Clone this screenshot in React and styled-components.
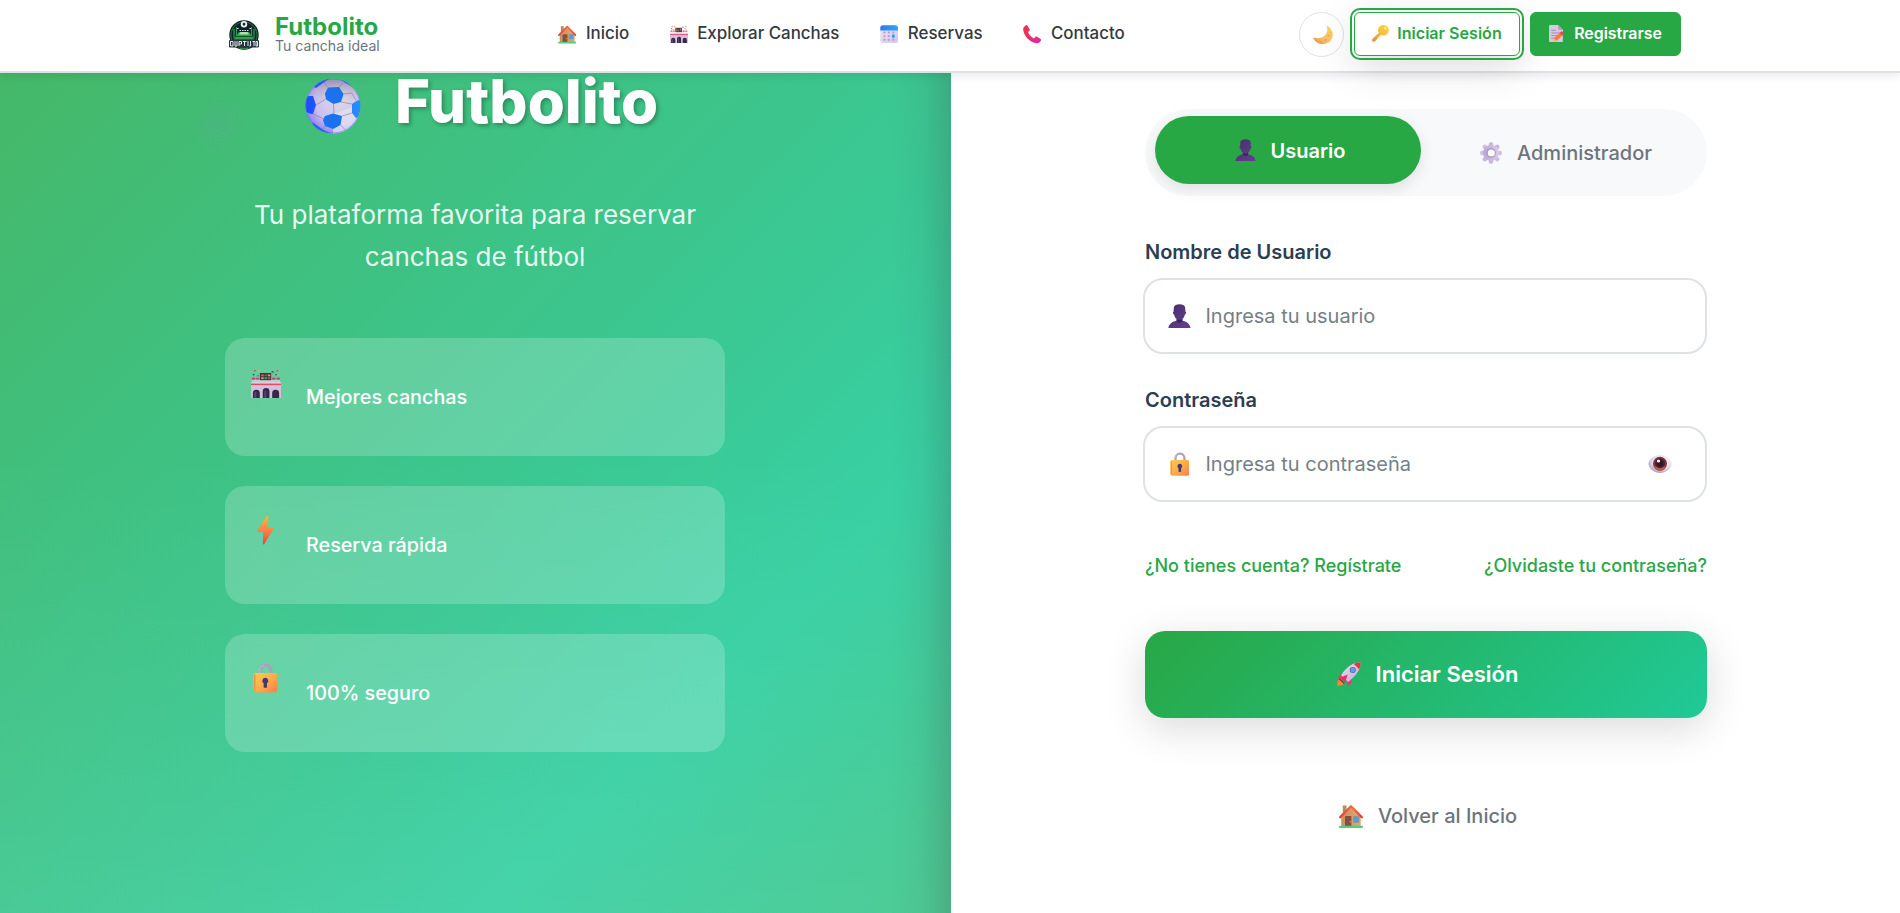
import React from "react";
import styled, { createGlobalStyle, css } from "styled-components";

const Global = createGlobalStyle`
  * { box-sizing: border-box; }
  body { margin: 0; background: #fefefe; font-family: Inter, "Liberation Sans", sans-serif; overflow: hidden; }
  button, input { font-family: inherit; }
  a { text-decoration: none; color: inherit; }
`;

/* ---------- icons ---------- */
const Svg = styled.svg`
  display: block;
  flex: none;
  width: ${(p) => p.$w}px;
  height: ${(p) => p.$h || p.$w}px;
`;

const House = ({ size }) => (
  <Svg $w={size} viewBox="0 0 32 32">
    <defs>
      <linearGradient id="hw" x1="0" x2="1"><stop offset="0" stopColor="#c98f62" /><stop offset="1" stopColor="#e3a878" /></linearGradient>
      <linearGradient id="hr" x1="0" x2="1"><stop offset="0" stopColor="#d9463a" /><stop offset=".6" stopColor="#f4703c" /><stop offset="1" stopColor="#dc4434" /></linearGradient>
    </defs>
    <path d="M5 2h5v12H5z" fill="#b98a6a" />
    <path d="M16 4 29 17v13H3V17z" fill="url(#hw)" />
    <rect x="8" y="16" width="8.500" height="14" rx="1" fill="#85503f" />
    <circle cx="15" cy="23.500" r=".9" fill="#f1b35c" />
    <rect x="19.500" y="16.500" width="7" height="8" rx=".6" fill="#36a9f5" stroke="#b87c5c" strokeWidth=".8" />
    <path d="M1.700 17.500 16 3 30.300 17.500" fill="none" stroke="url(#hr)" strokeWidth="3.200" strokeLinejoin="round" strokeLinecap="round" />
    <rect x="0" y="29" width="32" height="3" rx="1.400" fill="#4fcf7d" />
  </Svg>
);

const Stadium = ({ size }) => (
  <Svg $w={size} $h={size * 0.95} viewBox="0 0 32 30">
    <rect x="9.500" y="3" width="12" height="8" fill="#403046" />
    <rect x="11" y="4.500" width="2.500" height="2" fill="#e0674a" /><rect x="14.500" y="4.500" width="2.500" height="2" fill="#7a6a3a" /><rect x="18" y="4.500" width="2.500" height="2" fill="#f2a03a" />
    <rect x="11" y="7.500" width="2.500" height="2" fill="#f2a03a" /><rect x="14.500" y="7.500" width="2.500" height="2" fill="#3aa870" /><rect x="18" y="7.500" width="2.500" height="2" fill="#d84a5a" />
    <g fill="#c93f6c"><rect x="3" y="0" width="2" height="1.200" /><rect x="27" y="0" width="2" height="1.200" /><rect x="1" y="8" width="3.500" height="2" /><rect x="5.500" y="8" width="3" height="2" /><rect x="22.500" y="8" width="3.500" height="2" /><rect x="27.300" y="8" width="3.500" height="2" /></g>
    <g fill="#f3ac3b"><rect x="7" y="0" width="2.400" height="1.800" /><rect x="4" y="5" width="1.500" height="1.300" /><rect x="29" y="5" width="1.200" height="1.200" /></g>
    <g fill="#55406e"><rect x="2" y="4" width="1.600" height="1.600" /><rect x="22" y="1" width="2" height="1.600" /><rect x="6.500" y="5.500" width="1.500" height="1" /><rect x="26" y="4" width="1.500" height="1.500" /></g>
    <path d="M1 10.500h30v3H1z" fill="#eadfed" opacity=".6" />
    <rect x="0" y="13" width="32" height="17" fill="#d2c3dc" />
    <rect x="0" y="13" width="32" height="1.300" fill="#e3d6e9" />
    <rect x="0" y="14.300" width="32" height="1.600" fill="#ec4768" />
    <path d="M2 30v-5.500a3.700 3.700 0 0 1 7.400 0V30zM12.500 30v-7.500a3.600 3.600 0 0 1 7.200 0V30zM22.600 30v-5.500a3.700 3.700 0 0 1 7.400 0V30z" fill="#39264b" />
    <path d="M3.500 30v-5a2.200 2.200 0 0 1 2.200-2.200V30zM14.200 30v-7a2 2 0 0 1 2-2V30z" fill="#5b4470" />
  </Svg>
);

const Calendar = () => (
  <Svg $w={18.4} viewBox="0 0 32 32">
    <defs>
      <linearGradient id="cb" x2="1" y2="1"><stop offset="0" stopColor="#efe6f7" /><stop offset="1" stopColor="#d9c4ea" /></linearGradient>
      <linearGradient id="ct" x2="1"><stop offset="0" stopColor="#2b7bf0" /><stop offset="1" stopColor="#2ba7fb" /></linearGradient>
    </defs>
    <rect x=".5" y=".5" width="31" height="31" rx="5" fill="url(#cb)" />
    <path d="M.5 9.500V5.500a5 5 0 0 1 5-5h21a5 5 0 0 1 5 5v4z" fill="url(#ct)" />
    <g fill="#b3a2c1">{[0, 1, 2].map((r) => [0, 1, 2].map((c) => (r === 1 && c === 2 ? null : <rect key={`${r}${c}`} x={5.8 + c * 7.7} y={11.500 + r * 6.2} width="3.800" height="3.300" rx=".8" />)))}</g>
    <rect x="21" y="16.500" width="4.500" height="5.500" rx="1" fill="#1f9bf7" />
  </Svg>
);

const Phone = () => (
  <Svg $w={18.4} viewBox="0 0 32 32">
    <defs><linearGradient id="ph" x2="1" y2="1"><stop offset="0" stopColor="#e8354f" /><stop offset=".5" stopColor="#e92f6c" /><stop offset="1" stopColor="#cf2fb4" /></linearGradient></defs>
    <path d="M2.500 2.600 5 .6c1-.8 2.200-.5 2.900.6l3.600 6.300c.6 1 .4 2.200-.5 2.900L8.600 12.300c1.700 4.700 5.900 9 10.700 11.200l2.100-2.500c.8-.9 2-1.100 3-.5l6.200 3.900c1.100.7 1.300 2 .5 3l-2 2.400c-1.400 1.600-3.300 2.100-5.300 1.800C11.600 29.700 2 20 .3 8.100c-.3-2.100.5-4.100 2.200-5.500z" fill="url(#ph)" />
  </Svg>
);

const Moon = () => (
  <Svg $w={20} viewBox="0 0 32 32">
    <defs><linearGradient id="mn" x1="1" x2="0" y2="1"><stop offset="0" stopColor="#ffd65f" /><stop offset=".6" stopColor="#f7c16a" /><stop offset="1" stopColor="#dc8a4a" /></linearGradient></defs>
    <path d="M23.500 1.500C33.500 8 34 20 26.500 26.700 18.500 33.500 5.500 31.500.700 21.500c-.4-1 .5-1.800 1.500-1.400C14 24.400 26 15 22.200 2.500c-.3-1 .5-1.500 1.300-1z" fill="url(#mn)" />
    <g fill="#e3a253" opacity=".7"><circle cx="25" cy="17" r="1.700" /><circle cx="20" cy="24" r="2" /><circle cx="12" cy="27" r="1.400" /><circle cx="28" cy="12" r="1" /></g>
  </Svg>
);

const Key = () => (
  <Svg $w={17} viewBox="0 0 32 32">
    <defs><linearGradient id="ky" x1="1" x2="0" y2="1"><stop offset="0" stopColor="#ffd84a" /><stop offset=".5" stopColor="#fbb83f" /><stop offset="1" stopColor="#e6863f" /></linearGradient></defs>
    <path d="M22 0a9.800 9.800 0 1 1-5.200 18.200L6.800 29.800c-1.400 1.700-4.300 2.300-5.600 1.200s-1.300-3.400-.1-4.900L12.900 14.800A9.800 9.800 0 0 1 22 0z" fill="url(#ky)" />
    <circle cx="24.500" cy="6.500" r="2.200" fill="#fff1bd" />
  </Svg>
);

const Memo = () => (
  <Svg $w={15} $h={17} viewBox="0 0 28 32">
    <path d="M0 2a2 2 0 0 1 2-2h15l9 9v21a2 2 0 0 1-2 2H2a2 2 0 0 1-2-2z" fill="#d5cbe1" />
    <path d="M17 0l9 9h-7a2 2 0 0 1-2-2z" fill="#a99bb8" />
    <g stroke="#9d8eae" strokeWidth="1.800"><path d="M4 10h9M4 15h18M4 20h14M4 25h10" /></g>
    <path d="m9 25 12-11 5 5-12 11-6 1z" fill="#fb7a3d" /><path d="m20 15 3-3c1-1 5 3 5 4.500L25.500 20z" fill="#ef3d5b" /><path d="m9 25 5 5-6 1z" fill="#ffc085" />
  </Svg>
);

const Ball = () => (
  <Svg $w={56} viewBox="0 0 56 56">
    <defs>
      <radialGradient id="bl" cx=".62" cy=".38" r=".75"><stop offset="0" stopColor="#dedbe6" /><stop offset=".6" stopColor="#cbbfee" /><stop offset="1" stopColor="#7a63f5" /></radialGradient>
      <linearGradient id="bs" x2="0" y2="1"><stop offset="0" stopColor="#7c7192" stopOpacity=".65" /><stop offset=".45" stopColor="#bbb" stopOpacity="0" /></linearGradient>
      <linearGradient id="bp" x2="1"><stop offset="0" stopColor="#1f47ff" /><stop offset=".5" stopColor="#1a73f5" /><stop offset="1" stopColor="#2d93ff" /></linearGradient>
      <clipPath id="bc"><circle cx="28" cy="28" r="27.500" /></clipPath>
    </defs>
    <g clipPath="url(#bc)">
      <circle cx="28" cy="28" r="27.500" fill="url(#bl)" />
      <path d="M28 36l20-7 8 3v24H28z" fill="#e6e2f2" opacity=".7" />
      <circle cx="28" cy="28" r="27.500" fill="url(#bs)" />
      <path d="M23 9.500 34 9l4.500 7L36 24l-7.500 2-7.500-4.500-1-6zM20 38l8-2.500 9 2.500-1.500 9-7.500 4-8-3-2-6z" fill="#1b72ef" />
      <path d="M0 20c1-2 4-2 8-2l3 9-3 9c-4 0-7-2-8-4zM47 26l6-4 5 2v14l-7 2-4-5zM9 9C14 3 20 1 25 0l-4 3-10 7zM34 0c6 2 10 5 14 9l-8-4zM7 44l10 7 8 4H12z" fill="url(#bp)" />
      <path d="m11 27 9-5.500M28.500 26 29 35.500M36 24l11 2M38.500 16l8-1 4.500 7M23 9.500 19 4M34 9l4-4M8 36l11 5M20 48l-3 4M35.500 47l5 5M37 38l10-3" fill="none" stroke="#827c93" strokeWidth=".6" />
      <circle cx="28" cy="28" r="27" fill="none" stroke="#5d63ff" strokeOpacity=".5" />
    </g>
  </Svg>
);

const Bolt = () => (
  <Svg $w={17} $h={30} viewBox="0 0 17 30">
    <defs><linearGradient id="bo" x2="0" y2="1"><stop offset="0" stopColor="#fdb53c" /><stop offset=".5" stopColor="#fb8548" /><stop offset="1" stopColor="#f0413f" /></linearGradient></defs>
    <path d="M9.700.8c.6-.9 1.600-.4 1.600.6L10.800 12.500h5c.8 0 1 .6.700 1.200L7.300 29c-.6.800-1.600.5-1.500-.6L6.200 17H1c-.8 0-1.100-.7-.7-1.300z" fill="url(#bo)" />
  </Svg>
);

const Lock = ({ size }) => (
  <Svg $w={size * 0.82} $h={size} viewBox="0 0 25 30">
    <defs><linearGradient id="lk" x2="1" y2="1"><stop offset="0" stopColor="#ffcb4c" /><stop offset=".5" stopColor="#fcae4b" /><stop offset="1" stopColor="#fb7b4c" /></linearGradient></defs>
    <path d="M7 12V8a5.700 6.200 0 0 1 11.400 0v4" fill="none" stroke="#ae9fbb" strokeWidth="2.900" />
    <path d="M6.300 12V8a6 6.500 0 0 1 5-6" fill="none" stroke="#c9bdd2" strokeWidth=".8" />
    <rect x=".5" y="9.800" width="24" height="20" rx="2.500" fill="url(#lk)" />
    <path d="M1 12v16l1.500 1.300V10.500z" fill="#ee9147" />
    <path d="M12.500 14.800a3 3 0 0 1 1.700 5.500v3.900c0 1.200-3.400 1.200-3.400 0v-3.900a3 3 0 0 1 1.700-5.500z" fill="#433b6c" />
  </Svg>
);

const Person = ({ size }) => (
  <Svg $w={size} $h={size * 1.05} viewBox="0 0 30 32">
    <defs><linearGradient id="ps" x2="1" y2="1"><stop offset="0" stopColor="#463061" /><stop offset="1" stopColor="#673d99" /></linearGradient></defs>
    <path d="M7.500 4.500C8 1.500 11 .3 15 .3s7 1.200 7.500 4.200l.3 5.500c1.200.2 1.400 3.500-.7 4-.5 2.700-1.700 4.700-3.300 6v2.300c5 .9 9.600 3.300 11 9.700H.2c1.400-6.400 6-8.800 11-9.700V20c-1.600-1.300-2.800-3.300-3.300-6-2.100-.5-1.900-3.800-.7-4z" fill="url(#ps)" />
    <path d="M11.200 20c2.400 1.700 5.200 1.700 7.600 0v2.400c-2 2.800-5.600 2.800-7.600 0z" fill="#3b2359" />
  </Svg>
);

const Gear = () => (
  <Svg $w={22} viewBox="-16 -16 32 32">
    <defs><linearGradient id="ge" x2="1"><stop offset="0" stopColor="#bba5d6" /><stop offset="1" stopColor="#d9cfe8" /></linearGradient></defs>
    {[0, 45, 90, 135].map((a) => <rect key={a} x="-3.200" y="-15.800" width="6.400" height="31.600" rx="2.600" transform={`rotate(${a})`} fill={a < 60 ? "#c8b8dd" : "#cdbfe1"} />)}
    <circle r="11.500" fill="url(#ge)" /><circle r="7" fill="#a698b7" /><circle cx=".4" r="5.200" fill="#f8f9fa" />
  </Svg>
);

const Eye = () => (
  <Svg $w={24} $h={18} viewBox="0 0 24 18">
    <defs><radialGradient id="ey" cx=".6" cy=".35" r=".7"><stop offset="0" stopColor="#fff" /><stop offset=".6" stopColor="#e4dcec" /><stop offset="1" stopColor="#ab93c6" /></radialGradient></defs>
    <path d="M.3 9C1.500 3.500 6.500 0 12 0s10.500 3.500 11.700 9C22.500 14.500 17.500 18 12 18S1.500 14.500.3 9z" fill="url(#ey)" />
    <circle cx="12" cy="8.800" r="7" fill="#7c3b3a" /><path d="M5.600 11.500a7 7 0 0 0 12.800 0z" fill="#b0604a" />
    <circle cx="12" cy="8.200" r="5" fill="#561a30" /><circle cx="12" cy="8.400" r="3" fill="#2c1825" /><circle cx="10.500" cy="6" r="1.600" fill="#fff" />
  </Svg>
);

const Rocket = () => (
  <Svg $w={24} viewBox="0 0 32 32">
    <defs><linearGradient id="rk" x2="1" y2="1"><stop offset="0" stopColor="#e9e2f2" /><stop offset="1" stopColor="#bda9d6" /></linearGradient></defs>
    <path d="M.5 31.500C0 26 1.500 22.500 5.500 22l4.500 4.500c-.5 3.500-4 5.500-9.500 5z" fill="#f58a2c" />
    <path d="M13 13.500 6 15.800C4 16.700 2 20 1.500 22.500l9-1zM20.500 20l-1 7c-.8 2-3.500 4-6 4.500l-.5-8z" fill="#f0386c" />
    <path d="M31.300.8c.4 9.200-6 18.200-16.300 25.700L5.500 17.500C12.500 6.500 22 .4 31.300.8z" fill="url(#rk)" />
    <path d="M31.300.8c.1 3-.4 6-1.700 8.800L22.500 2.700C25.400 1.300 28.300.6 31.300.8z" fill="#ef2f4c" />
    <path d="M5 22c3-3 5.500-4.500 9-5-1 3.500-1.500 7-4 10z" fill="#ee2c67" /><path d="m3.500 21.500 7 6.500-1.500 1L2.500 23z" fill="#4d3a72" />
    <circle cx="21" cy="10.700" r="4" fill="#6d5f97" /><circle cx="21" cy="10.700" r="2.900" fill="#55a5ee" />
  </Svg>
);

const Crest = () => (
  <Svg $w={30} viewBox="0 0 30 30">
    <circle cx="15" cy="15" r="14.700" fill="#10212b" />
    <circle cx="15" cy="15" r="13" fill="none" stroke="#1f6b3b" strokeWidth="1.200" />
    <path d="M5 9v9M7.500 7v10M22.500 7v10M25 9v9" stroke="#2f9b4c" strokeWidth="1.300" />
    <circle cx="15" cy="4.200" r="3.200" fill="#eef3f1" /><path d="m15 2.500 1.500 1.200-.6 1.700h-1.800l-.6-1.700z" fill="#10212b" />
    <path d="M8 8.500h1.500M20.500 8.500H22M10.500 10.500h9" stroke="#dfe9e4" strokeWidth="1.100" strokeDasharray="1.500 1" />
    <path d="M10 12h10l5.500 7.500h-21z" fill="#2fa147" /><path d="M11.500 12h7l1.500 2.500h-10z" fill="#b4dfb0" /><path d="M6 16.500h18" stroke="#14512c" />
    <rect x="0" y="20" width="30" height="7.500" rx="1" fill="#26363f" />
    <path d="M1.500 21.300v4.800M1.500 21.500h2.500v4.500h-2M6 21v5h2v-5M10 26v-4.500h2.500V24H10M15.500 21v5M14 21.500h3.500M19 21v5M21.500 21v5h-1M23.500 21.500h2.500M25 21v5M27 21.500h1.500v4.500H27z" fill="none" stroke="#e4eae9" strokeWidth="1" />
    <path d="M10.500 28.500h9" stroke="#2c8c48" strokeWidth="1" />
  </Svg>
);

/* ---------- header ---------- */
const Header = styled.header`
  position: relative;
  z-index: 5;
  height: 73px;
  padding: 0 219px 2px 229px;
  display: flex;
  align-items: center;
  background: #fff;
  border-bottom: 2px solid #dee2e6;
  box-shadow: 0 2px 10px rgba(0, 0, 0, 0.1);
`;
const Brand = styled.a`
  width: 329px;
  display: flex;
  align-items: center;
  gap: 16px;
`;
const BrandText = styled.span`
  display: flex;
  flex-direction: column;
  padding-bottom: 1px;
`;
const BrandName = styled.span`
  font-size: 24px;
  font-weight: 700;
  line-height: 24px;
  color: #28a745;
`;
const BrandTag = styled.span`
  font-size: 14.1px;
  line-height: 14px;
  color: #6c757d;
`;
const Nav = styled.nav`
  display: flex;
  gap: 40.5px;
`;
const NavLink = styled.a`
  display: flex;
  align-items: center;
  gap: 9.5px;
  font-size: 16.9px;
  font-weight: 500;
  line-height: 20px;
  color: #343a40;
  span { margin-top: -3px; }
`;
const Actions = styled.div`
  display: flex;
  align-items: flex-start;
  gap: 10px;
  margin-left: auto;
`;
const ThemeButton = styled.button`
  width: 45px;
  height: 45px;
  padding: 0 0 0 2px;
  display: grid;
  place-items: center;
  border: 1px solid #dee2e6;
  border-radius: 50%;
  background: #fff;
`;
const HeaderButton = styled.button`
  height: 44px;
  width: ${(p) => (p.$outlined ? 166 : 151)}px;
  padding: 0 0 2px;
  display: flex;
  align-items: center;
  justify-content: center;
  gap: ${(p) => (p.$outlined ? 8 : 10)}px;
  border: 1px solid #28a745;
  border-radius: 6px;
  font-size: ${(p) => (p.$outlined ? 16.1 : 15.9)}px;
  font-weight: 600;
  color: #fff;
  background: #28a745;
  ${(p) => p.$outlined && css`
    color: #28a745;
    background: #fff;
    outline: 2px solid #28a745;
    outline-offset: 2px;
    box-shadow: 0 10px 40px rgba(0, 0, 0, 0.15);
  `}
`;

/* ---------- left panel ---------- */
const Main = styled.main`
  display: flex;
  height: 840px;
`;
const Hero = styled.section`
  width: 951px;
  padding-left: 225px;
  background:
    linear-gradient(90deg, transparent 890px, rgba(60, 60, 60, 0.05) 922px, rgba(60, 60, 60, 0.2) 951px),
    radial-gradient(circle at 218px 52px, rgba(100, 160, 160, 0.22), transparent 28px),
    linear-gradient(180deg, transparent 45%, rgba(255, 255, 255, 0.07)),
    linear-gradient(135deg, #45b868 0%, #3fc07f 27%, #3ac995 57%, #38d0a3 74%, #41c78c 100%);
`;
const HeroInner = styled.div`
  width: 500px;
  display: flex;
  flex-direction: column;
`;
const HeroTitle = styled.h1`
  margin: 0;
  padding-left: 80px;
  height: 66px;
  display: flex;
  align-items: center;
  gap: 34px;
  font-size: 60px;
  font-weight: 800;
  line-height: 60px;
  color: #fff;
  text-shadow: 2px 2px 4px rgba(0, 0, 0, 0.3);
  span { margin-top: -10px; }
`;
const Tagline = styled.p`
  margin: 55px 0 0;
  text-align: center;
  font-size: 26px;
  line-height: 42px;
  color: rgba(255, 255, 255, 0.9);
`;
const Features = styled.ul`
  list-style: none;
  margin: 60px 0 0;
  padding: 0;
  display: flex;
  flex-direction: column;
  gap: 30px;
`;
const Feature = styled.li`
  height: 118px;
  display: flex;
  align-items: center;
  border-radius: 20px;
  background: rgba(255, 255, 255, 0.2);
  font-size: 19.75px;
  font-weight: 500;
  color: #fff;
`;
const FeatureIcon = styled.span`
  width: 81px;
  padding-bottom: ${(p) => p.$lift}px;
  display: flex;
  justify-content: center;
`;

/* ---------- right panel ---------- */
const FormSide = styled.section`
  flex: 1;
  padding: 36px 193px 0 194px;
  background: #fff;
`;
const Tabs = styled.div`
  height: 87px;
  padding: 7px 10px 0;
  display: flex;
  gap: 10px;
  border-radius: 50px;
  background: #f8f9fb;
`;
const Tab = styled.button`
  flex: 1;
  height: ${(p) => (p.$active ? 68 : 72)}px;
  padding: 1px 0 0 4px;
  display: flex;
  align-items: center;
  justify-content: center;
  gap: 15px;
  border: 0;
  border-radius: 40px;
  font-size: 20px;
  font-weight: ${(p) => (p.$active ? 600 : 500)};
  color: ${(p) => (p.$active ? "#fff" : "#6c757d")};
  background: ${(p) => (p.$active ? "#28a745" : "transparent")};
  box-shadow: ${(p) => (p.$active ? "0 5px 15px rgba(0,0,0,.1)" : "none")};
`;
const Field = styled.div`
  margin-top: ${(p) => p.$top}px;
`;
const Label = styled.label`
  display: block;
  font-size: 20px;
  font-weight: 600;
  line-height: 24px;
  color: #2c3e50;
`;
const InputBox = styled.div`
  height: 76px;
  margin: 14px 0 0 -2px;
  padding: 0 33px 0 23px;
  display: flex;
  align-items: center;
  gap: 14.5px;
  border: 2px solid #dee2e6;
  border-radius: 20px;
  background: #fff;
`;
const Input = styled.input`
  flex: 1;
  min-width: 0;
  padding: 0;
  border: 0;
  outline: 0;
  background: transparent;
  font-size: 20px;
  &::placeholder { color: #757f86; opacity: 1; }
`;
const InputIcon = styled.span`
  width: 23px;
  display: flex;
  justify-content: center;
`;
const Links = styled.div`
  margin-top: 52px;
  display: flex;
  justify-content: space-between;
  font-size: 18px;
  font-weight: 500;
  line-height: 24px;
  color: #28a745;
`;
const Submit = styled.button`
  width: 100%;
  height: 87px;
  margin-top: 53px;
  padding: 0 0 2px 3px;
  display: flex;
  align-items: center;
  justify-content: center;
  gap: 15px;
  border: 0;
  border-radius: 20px;
  font-size: 22px;
  font-weight: 600;
  color: #fff;
  background: linear-gradient(135deg, #28a745, #20c997);
  box-shadow: 0 10px 40px rgba(0, 0, 0, 0.15);
`;
const Back = styled.a`
  margin-top: 85px;
  padding-left: 4px;
  display: flex;
  align-items: center;
  justify-content: center;
  gap: 15px;
  font-size: 20px;
  font-weight: 500;
  line-height: 26px;
  color: #6c757d;
`;

export default function App() {
  return (
    <>
      <Global />
      <Header>
        <Brand>
          <Crest />
          <BrandText>
            <BrandName>Futbolito</BrandName>
            <BrandTag>Tu cancha ideal</BrandTag>
          </BrandText>
        </Brand>
        <Nav>
          <NavLink><House size={18.4} /><span>Inicio</span></NavLink>
          <NavLink><Stadium size={18} /><span>Explorar Canchas</span></NavLink>
          <NavLink><Calendar /><span>Reservas</span></NavLink>
          <NavLink><Phone /><span>Contacto</span></NavLink>
        </Nav>
        <Actions>
          <ThemeButton><Moon /></ThemeButton>
          <HeaderButton $outlined><Key /><span>Iniciar Sesión</span></HeaderButton>
          <HeaderButton><Memo /><span>Registrarse</span></HeaderButton>
        </Actions>
      </Header>
      <Main>
        <Hero>
          <HeroInner>
            <HeroTitle><Ball /><span>Futbolito</span></HeroTitle>
            <Tagline>Tu plataforma favorita para reservar<br />canchas de fútbol</Tagline>
            <Features>
              <Feature><FeatureIcon $lift={26}><Stadium size={30} /></FeatureIcon>Mejores canchas</Feature>
              <Feature><FeatureIcon $lift={30}><Bolt /></FeatureIcon>Reserva rápida</Feature>
              <Feature><FeatureIcon $lift={30}><Lock size={30} /></FeatureIcon>100% seguro</Feature>
            </Features>
          </HeroInner>
        </Hero>
        <FormSide>
          <Tabs>
            <Tab $active><Person size={21} /><span>Usuario</span></Tab>
            <Tab><Gear /><span>Administrador</span></Tab>
          </Tabs>
          <Field $top={44}>
            <Label>Nombre de Usuario</Label>
            <InputBox>
              <InputIcon><Person size={23} /></InputIcon>
              <Input placeholder="Ingresa tu usuario" />
            </InputBox>
          </Field>
          <Field $top={34}>
            <Label>Contraseña</Label>
            <InputBox>
              <InputIcon><Lock size={24} /></InputIcon>
              <Input type="password" placeholder="Ingresa tu contraseña" />
              <Eye />
            </InputBox>
          </Field>
          <Links>
            <a>¿No tienes cuenta? Regístrate</a>
            <a>¿Olvidaste tu contraseña?</a>
          </Links>
          <Submit><Rocket /><span>Iniciar Sesión</span></Submit>
          <Back><House size={24} /><span>Volver al Inicio</span></Back>
        </FormSide>
      </Main>
    </>
  );
}
